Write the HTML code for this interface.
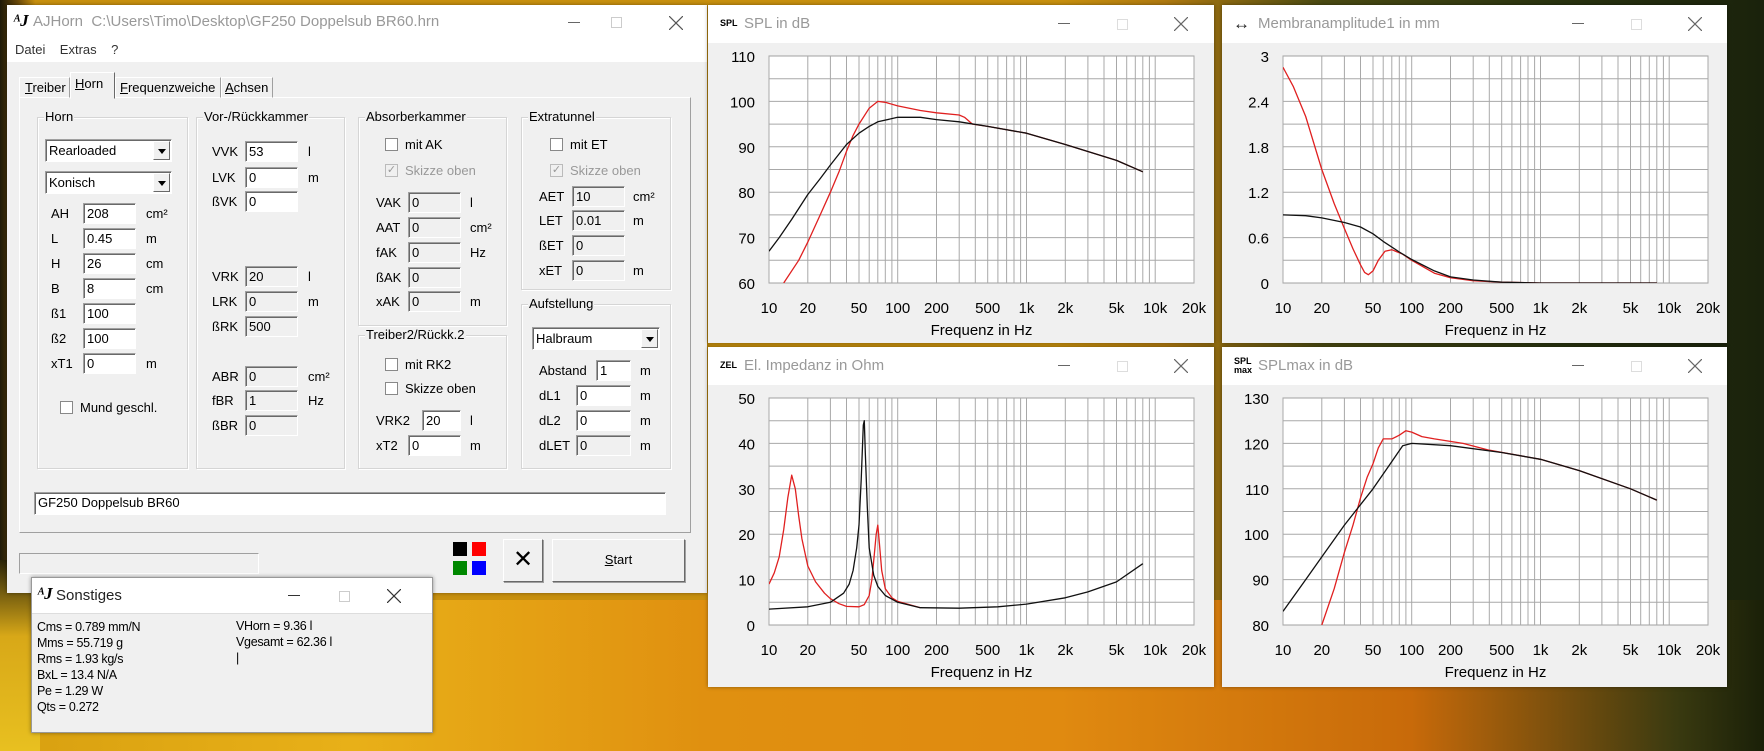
<!DOCTYPE html>
<html><head><meta charset="utf-8">
<style>
*{box-sizing:border-box;margin:0;padding:0}
body{width:1764px;height:751px;overflow:hidden;position:relative;font-family:"Liberation Sans",sans-serif;font-size:13px;color:#000;
background:linear-gradient(90deg,#1f1a08 0%,#6a4a0a 1%,#c8900e 2%,#c8900e 60%,#b07a10 66%,#4a4a12 75%,#2a3410 88%,#1a220c 100%);}
.bgbot{position:absolute;left:0;top:600px;width:1764px;height:151px;background:linear-gradient(90deg,#d8a010 0%,#e8b018 20%,#e09010 40%,#e08a10 60%,#c86a0a 80%,#3a3a10 95%,#1a2008 100%)}
.bgleft{position:absolute;left:0;top:560px;width:40px;height:191px;background:linear-gradient(180deg,#2a2408,#d8a818 40%,#e8c020)}
.win{position:absolute;background:#f0f0f0;box-shadow:0 0 4px rgba(0,0,0,.4)}
.tb{position:absolute;left:0;top:0;right:0;background:#fff}
.tt{position:absolute;color:#999;font-size:15px;white-space:nowrap}
.ab{position:absolute}
.inp{position:absolute;height:21px;background:#fff;border:1px solid;border-color:#a0a0a0 #fff #fff #a0a0a0;box-shadow:inset 1px 1px 0 #696969;padding:2px 0 0 3px;font-size:13px}
.dis{background:#f0f0f0}
.grp{position:absolute;border:1px solid #d5d5d5;box-shadow:1px 1px 0 #fff inset,1px 1px 0 #fff}
.grp>span{position:absolute;left:6px;top:-9px;background:#f0f0f0;padding:0 1px;font-size:13px}
.lbl{position:absolute;font-size:13px;white-space:nowrap}
.cb{position:absolute;width:13px;height:13px;border:1px solid #888;background:#fff}
.cbd{border-color:#bbb;background:#f0f0f0;color:#999;font-size:11px;line-height:11px;text-align:center}
.combo{position:absolute;height:23px;background:#fff;border:1px solid;border-color:#a0a0a0 #fff #fff #a0a0a0;box-shadow:inset 1px 1px 0 #696969;padding:3px 0 0 3px}
.combo i{position:absolute;right:1px;top:1px;width:17px;height:19px;background:#f0f0f0;border:1px solid;border-color:#fff #696969 #696969 #fff}
.combo i:after{content:"";position:absolute;left:4px;top:7px;border:4px solid transparent;border-top:5px solid #000}
.btn{position:absolute;background:#f0f0f0;border:1px solid;border-color:#fff #696969 #696969 #fff;box-shadow:1px 1px 0 #a0a0a0;text-align:center}
.ctl{position:absolute;color:#444;font-size:16px}
.x{position:absolute;width:14px;height:14px}
svg text{font-family:"Liberation Sans",sans-serif}
</style></head><body>
<div class="bgbot"></div><div class="bgleft"></div>

<!-- MAIN WINDOW -->
<div class="win" style="left:7px;top:5px;width:700px;height:588px">
 <div class="tb" style="height:57px"></div>
 <div class="ab" style="left:6px;top:6px;font-family:'Liberation Serif',serif;font-style:italic;font-size:17px;font-weight:bold">ᴬJ</div>
 <div class="tt" style="left:26px;top:8px">AJHorn&nbsp; C:\Users\Timo\Desktop\GF250 Doppelsub BR60.hrn</div>
 <div class="ab" style="left:561px;top:17px;width:12px;border-top:1px solid #666"></div>
 <div class="ab" style="left:604px;top:12px;width:11px;height:11px;border:1px solid #ccc"></div>
 <svg class="x" style="left:662px;top:11px"><path d="M0 0L14 14M14 0L0 14" stroke="#555" stroke-width="1.2"/></svg>
 <div class="lbl" style="left:8px;top:37px;color:#333">Datei&nbsp;&nbsp;&nbsp; Extras&nbsp;&nbsp;&nbsp; ?</div>
 <!-- tab panel -->
 <div class="ab" style="left:12px;top:92px;width:672px;height:436px;border:1px solid;border-color:#fff #a0a0a0 #a0a0a0 #fff"></div>
 <div class="ab" style="left:12px;top:72px;width:51px;height:21px;border:1px solid;border-color:#fff #a0a0a0 transparent #fff"></div>
 <div class="ab" style="left:63px;top:67px;width:45px;height:27px;background:#f0f0f0;border:1px solid;border-color:#fff #696969 transparent #fff"></div>
 <div class="ab" style="left:108px;top:72px;width:106px;height:21px;border:1px solid;border-color:#fff #a0a0a0 transparent #fff"></div>
 <div class="ab" style="left:214px;top:72px;width:52px;height:21px;border:1px solid;border-color:#fff #a0a0a0 transparent #fff"></div>
 <div class="lbl" style="left:18px;top:75px"><u>T</u>reiber</div>
 <div class="lbl" style="left:68px;top:71px"><u>H</u>orn</div>
 <div class="lbl" style="left:113px;top:75px"><u>F</u>requenzweiche</div>
 <div class="lbl" style="left:218px;top:75px"><u>A</u>chsen</div>

 <!-- Horn group -->
 <div class="grp" style="left:30px;top:112px;width:151px;height:352px"><span>Horn</span></div>
 <div class="combo" style="left:38px;top:134px;width:127px">Rearloaded<i></i></div>
 <div class="combo" style="left:38px;top:166px;width:127px">Konisch<i></i></div>
 <div class="lbl" style="left:44px;top:201px">AH</div><div class="inp" style="left:76px;top:198px;width:53px">208</div><div class="lbl" style="left:139px;top:201px">cm²</div>
 <div class="lbl" style="left:44px;top:226px">L</div><div class="inp" style="left:76px;top:223px;width:53px">0.45</div><div class="lbl" style="left:139px;top:226px">m</div>
 <div class="lbl" style="left:44px;top:251px">H</div><div class="inp" style="left:76px;top:248px;width:53px">26</div><div class="lbl" style="left:139px;top:251px">cm</div>
 <div class="lbl" style="left:44px;top:276px">B</div><div class="inp" style="left:76px;top:273px;width:53px">8</div><div class="lbl" style="left:139px;top:276px">cm</div>
 <div class="lbl" style="left:44px;top:301px">ß1</div><div class="inp" style="left:76px;top:298px;width:53px">100</div>
 <div class="lbl" style="left:44px;top:326px">ß2</div><div class="inp" style="left:76px;top:323px;width:53px">100</div>
 <div class="lbl" style="left:44px;top:351px">xT1</div><div class="inp" style="left:76px;top:348px;width:53px">0</div><div class="lbl" style="left:139px;top:351px">m</div>
 <div class="cb" style="left:53px;top:396px"></div><div class="lbl" style="left:73px;top:395px">Mund geschl.</div>

 <!-- Vor/Rück -->
 <div class="grp" style="left:189px;top:112px;width:149px;height:352px"><span>Vor-/Rückkammer</span></div>
 <div class="lbl" style="left:205px;top:139px">VVK</div><div class="inp" style="left:238px;top:136px;width:53px">53</div><div class="lbl" style="left:301px;top:139px">l</div>
 <div class="lbl" style="left:205px;top:165px">LVK</div><div class="inp" style="left:238px;top:162px;width:53px">0</div><div class="lbl" style="left:301px;top:165px">m</div>
 <div class="lbl" style="left:205px;top:189px">ßVK</div><div class="inp" style="left:238px;top:186px;width:53px">0</div>
 <div class="lbl" style="left:205px;top:264px">VRK</div><div class="inp dis" style="left:238px;top:261px;width:53px">20</div><div class="lbl" style="left:301px;top:264px">l</div>
 <div class="lbl" style="left:205px;top:289px">LRK</div><div class="inp dis" style="left:238px;top:286px;width:53px">0</div><div class="lbl" style="left:301px;top:289px">m</div>
 <div class="lbl" style="left:205px;top:314px">ßRK</div><div class="inp dis" style="left:238px;top:311px;width:53px">500</div>
 <div class="lbl" style="left:205px;top:364px">ABR</div><div class="inp dis" style="left:238px;top:361px;width:53px">0</div><div class="lbl" style="left:301px;top:364px">cm²</div>
 <div class="lbl" style="left:205px;top:388px">fBR</div><div class="inp dis" style="left:238px;top:385px;width:53px">1</div><div class="lbl" style="left:301px;top:388px">Hz</div>
 <div class="lbl" style="left:205px;top:413px">ßBR</div><div class="inp dis" style="left:238px;top:410px;width:53px">0</div>

 <!-- Absorberkammer -->
 <div class="grp" style="left:351px;top:112px;width:149px;height:209px"><span>Absorberkammer</span></div>
 <div class="cb" style="left:378px;top:133px"></div><div class="lbl" style="left:398px;top:132px">mit AK</div>
 <div class="cb cbd" style="left:378px;top:159px">✓</div><div class="lbl" style="left:398px;top:158px;color:#999">Skizze oben</div>
 <div class="lbl" style="left:369px;top:190px">VAK</div><div class="inp dis" style="left:401px;top:187px;width:53px">0</div><div class="lbl" style="left:463px;top:190px">l</div>
 <div class="lbl" style="left:369px;top:215px">AAT</div><div class="inp dis" style="left:401px;top:212px;width:53px">0</div><div class="lbl" style="left:463px;top:215px">cm²</div>
 <div class="lbl" style="left:369px;top:240px">fAK</div><div class="inp dis" style="left:401px;top:237px;width:53px">0</div><div class="lbl" style="left:463px;top:240px">Hz</div>
 <div class="lbl" style="left:369px;top:265px">ßAK</div><div class="inp dis" style="left:401px;top:262px;width:53px">0</div>
 <div class="lbl" style="left:369px;top:289px">xAK</div><div class="inp dis" style="left:401px;top:286px;width:53px">0</div><div class="lbl" style="left:463px;top:289px">m</div>

 <!-- Treiber2 -->
 <div class="grp" style="left:351px;top:330px;width:149px;height:134px"><span>Treiber2/Rückk.2</span></div>
 <div class="cb" style="left:378px;top:353px"></div><div class="lbl" style="left:398px;top:352px">mit RK2</div>
 <div class="cb" style="left:378px;top:377px"></div><div class="lbl" style="left:398px;top:376px">Skizze oben</div>
 <div class="lbl" style="left:369px;top:408px">VRK2</div><div class="inp" style="left:415px;top:405px;width:39px">20</div><div class="lbl" style="left:463px;top:408px">l</div>
 <div class="lbl" style="left:369px;top:433px">xT2</div><div class="inp" style="left:401px;top:430px;width:53px">0</div><div class="lbl" style="left:463px;top:433px">m</div>

 <!-- Extratunnel -->
 <div class="grp" style="left:514px;top:112px;width:150px;height:173px"><span>Extratunnel</span></div>
 <div class="cb" style="left:543px;top:133px"></div><div class="lbl" style="left:563px;top:132px">mit ET</div>
 <div class="cb cbd" style="left:543px;top:159px">✓</div><div class="lbl" style="left:563px;top:158px;color:#999">Skizze oben</div>
 <div class="lbl" style="left:532px;top:184px">AET</div><div class="inp dis" style="left:565px;top:181px;width:53px">10</div><div class="lbl" style="left:626px;top:184px">cm²</div>
 <div class="lbl" style="left:532px;top:208px">LET</div><div class="inp dis" style="left:565px;top:205px;width:53px">0.01</div><div class="lbl" style="left:626px;top:208px">m</div>
 <div class="lbl" style="left:532px;top:233px">ßET</div><div class="inp dis" style="left:565px;top:230px;width:53px">0</div>
 <div class="lbl" style="left:532px;top:258px">xET</div><div class="inp dis" style="left:565px;top:255px;width:53px">0</div><div class="lbl" style="left:626px;top:258px">m</div>

 <!-- Aufstellung -->
 <div class="grp" style="left:514px;top:299px;width:150px;height:165px"><span>Aufstellung</span></div>
 <div class="combo" style="left:525px;top:322px;width:128px">Halbraum<i></i></div>
 <div class="lbl" style="left:532px;top:358px">Abstand</div><div class="inp" style="left:589px;top:355px;width:35px">1</div><div class="lbl" style="left:633px;top:358px">m</div>
 <div class="lbl" style="left:532px;top:383px">dL1</div><div class="inp" style="left:569px;top:380px;width:55px">0</div><div class="lbl" style="left:633px;top:383px">m</div>
 <div class="lbl" style="left:532px;top:408px">dL2</div><div class="inp" style="left:569px;top:405px;width:55px">0</div><div class="lbl" style="left:633px;top:408px">m</div>
 <div class="lbl" style="left:532px;top:433px">dLET</div><div class="inp dis" style="left:569px;top:430px;width:55px">0</div><div class="lbl" style="left:633px;top:433px">m</div>

 <div class="inp" style="left:27px;top:487px;width:632px;height:23px">GF250 Doppelsub BR60</div>
 <div class="ab" style="left:12px;top:548px;width:240px;height:21px;border:1px solid;border-color:#a0a0a0 #fff #fff #a0a0a0"></div>
 <div class="ab" style="left:446px;top:537px;width:14px;height:14px;background:#000"></div>
 <div class="ab" style="left:465px;top:537px;width:14px;height:14px;background:#f00"></div>
 <div class="ab" style="left:446px;top:556px;width:14px;height:14px;background:#080"></div>
 <div class="ab" style="left:465px;top:556px;width:14px;height:14px;background:#00f"></div>
 <div class="btn" style="left:496px;top:534px;width:40px;height:43px;font-size:24px;line-height:40px">✕</div>
 <div class="btn" style="left:545px;top:534px;width:133px;height:43px;line-height:40px"><u>S</u>tart</div>
</div>

<!-- SONSTIGES -->
<div class="win" style="left:31px;top:577px;width:402px;height:156px;border:1px solid #999">
 <div class="tb" style="height:36px;border-bottom:1px solid #ddd"></div>
 <div class="ab" style="left:5px;top:6px;font-family:'Liberation Serif',serif;font-style:italic;font-size:17px;font-weight:bold">ᴬJ</div>
 <div class="ab" style="left:24px;top:9px;font-size:15px;color:#222">Sonstiges</div>
 <div class="ab" style="left:256px;top:17px;width:12px;border-top:1px solid #333"></div>
 <div class="ab" style="left:307px;top:13px;width:11px;height:11px;border:1px solid #ccc"></div>
 <svg class="x" style="left:355px;top:11px"><path d="M0 0L14 14M14 0L0 14" stroke="#333" stroke-width="1.2"/></svg>
 <div class="ab" style="left:5px;top:41px;font-size:12.5px;line-height:16px;letter-spacing:-.3px">Cms = 0.789 mm/N<br>Mms = 55.719 g<br>Rms = 1.93 kg/s<br>BxL = 13.4 N/A<br>Pe = 1.29 W<br>Qts = 0.272</div>
 <div class="ab" style="left:204px;top:40px;font-size:12.5px;line-height:16px;letter-spacing:-.3px">VHorn = 9.36 l<br>Vgesamt = 62.36 l<br>|</div>
</div>

<!-- CHARTS -->
<div class="win" id="c1" style="left:708px;top:5px;width:506px;height:338px"></div>
<div class="win" id="c2" style="left:1222px;top:5px;width:505px;height:338px"></div>
<div class="win" id="c3" style="left:708px;top:347px;width:506px;height:340px"></div>
<div class="win" id="c4" style="left:1222px;top:347px;width:505px;height:340px"></div>

<script>
var L=61,T=51,W=425,H=227;
function xm(f){return L+W*Math.log10(f/10)/Math.log10(2000);}
function build(id,icon,title,ylabels,ymin,ymax,curves){
 var el=document.getElementById(id);
 var s='<div class="tb" style="height:38px"></div>';
 if(icon=='max') s+='<div class="ab" style="left:12px;top:10px;font-size:9px;font-weight:bold;line-height:9px">SPL<br>max</div>';
 else if(icon=='arr') s+='<div class="ab" style="left:11px;top:9px;font-size:17px;color:#222">↔</div>';
 else s+='<div class="ab" style="left:12px;top:13px;font-size:9px;font-weight:bold">'+icon+'</div>';
 s+='<div class="tt" style="left:36px;top:10px">'+title+'</div>';
 s+='<div class="ab" style="left:350px;top:18px;width:12px;border-top:1px solid #666"></div><div class="ab" style="left:409px;top:14px;width:11px;height:11px;border:1px solid #ddd"></div><svg class="x" style="left:466px;top:12px"><path d="M0 0L14 14M14 0L0 14" stroke="#666" stroke-width="1.2"/></svg>';
 var g='<svg width="506" height="340" style="position:absolute;left:0;top:0">';
 g+='<rect x="'+L+'" y="'+T+'" width="'+W+'" height="'+H+'" fill="#fff" stroke="#a0a0a0"/>';
 [10,100,1000,10000].forEach(function(d){for(var m=1;m<10;m++){var f=d*m;if(f>20000)break;var x=xm(f).toFixed(1);g+='<line x1="'+x+'" x2="'+x+'" y1="'+T+'" y2="'+(T+H)+'" stroke="#a8a8a8"/>';}});
 for(var i=1;i<10;i++){var y=(T+H*i/10).toFixed(1);g+='<line x1="'+L+'" x2="'+(L+W)+'" y1="'+y+'" y2="'+y+'" stroke="#a8a8a8"/>';}
 ylabels.forEach(function(t,i){g+='<text x="47" y="'+(T+H*i/5+6).toFixed(1)+'" text-anchor="end" font-size="15">'+t+'</text>';});
 var xl=[[10,'10'],[20,'20'],[50,'50'],[100,'100'],[200,'200'],[500,'500'],[1000,'1k'],[2000,'2k'],[5000,'5k'],[10000,'10k'],[20000,'20k']];
 xl.forEach(function(a){g+='<text x="'+xm(a[0]).toFixed(1)+'" y="'+(T+H+30)+'" text-anchor="middle" font-size="15">'+a[1]+'</text>';});
 g+='<text x="'+(L+W/2)+'" y="'+(T+H+52)+'" text-anchor="middle" font-size="15">Frequenz in Hz</text>';
 g+='<clipPath id="cp'+id+'"><rect x="'+L+'" y="'+T+'" width="'+W+'" height="'+H+'"/></clipPath>';
 curves.forEach(function(c){
  var p=c.pts.map(function(q){return xm(q[0]).toFixed(1)+','+(T+H-(q[1]-ymin)/(ymax-ymin)*H).toFixed(1);}).join(' ');
  g+='<polyline clip-path="url(#cp'+id+')" points="'+p+'" fill="none" stroke="'+c.col+'" stroke-width="1.3" stroke-linejoin="round"/>';
 });
 g+='</svg>';
 el.innerHTML=s+g;
}
build('c1','SPL','SPL in dB',['110','100','90','80','70','60'],60,110,[
 {col:'#e02020',pts:[[13,60],[17,65],[20,69],[25,75],[30,80],[35,84.5],[40,89],[45,92.5],[50,95],[60,98.5],[70,100],[80,99.8],[100,99],[150,98],[200,97.5],[300,97],[330,96.5],[380,95],[500,94.5],[1000,93],[2000,90.5],[5000,87],[8000,84.5]]},
 {col:'#111',pts:[[10,67],[12,70],[15,74],[20,79.5],[25,83],[30,86],[40,90.5],[50,93],[60,94.5],[70,95.5],[100,96.5],[150,96.5],[200,96],[300,95.5],[500,94.5],[1000,93],[2000,90.5],[5000,87],[8000,84.5]]}]);
build('c2','arr','Membranamplitude1 in mm',['3','2.4','1.8','1.2','0.6','0'],0,3,[
 {col:'#e02020',pts:[[10,2.85],[12,2.6],[15,2.2],[20,1.5],[25,1.05],[30,0.72],[35,0.45],[40,0.24],[43,0.14],[46,0.11],[50,0.16],[55,0.3],[62,0.42],[70,0.44],[85,0.38],[100,0.3],[150,0.13],[200,0.07],[300,0.03],[500,0.01],[1000,0],[8000,0]]},
 {col:'#111',pts:[[10,0.9],[15,0.89],[20,0.86],[30,0.8],[40,0.74],[50,0.65],[60,0.55],[80,0.41],[100,0.31],[150,0.16],[200,0.08],[300,0.04],[500,0.01],[1000,0],[8000,0]]}]);
build('c3','ZEL','El. Impedanz in Ohm',['50','40','30','20','10','0'],0,50,[
 {col:'#e02020',pts:[[10,9],[11,11.5],[12,15],[13,21],[14,28],[15,33],[16,30],[17,24],[18,19],[20,13],[23,9.5],[27,7],[30,5.8],[35,4.7],[40,4.1],[50,4],[55,4.5],[60,6.5],[63,10],[66,16],[68,20],[70,22],[72,18],[75,12],[80,8],[90,6],[100,5.2],[150,3.8]]},
 {col:'#111',pts:[[10,3.5],[20,4],[30,5],[38,7],[42,9],[45,12],[48,17],[50,22],[52,32],[54,44],[55,45],[56,38],[58,26],[60,17],[65,11],[70,8.5],[80,6.5],[100,5],[150,3.8],[300,3.7],[600,4],[1000,4.6],[2000,6],[3000,7.3],[5000,9.5],[8000,13.5]]}]);
build('c4','max','SPLmax in dB',['130','120','110','100','90','80'],80,130,[
 {col:'#e02020',pts:[[20,80],[25,88],[30,96],[35,102],[40,108],[45,112.5],[50,115.5],[55,119],[60,121],[70,121],[80,121.8],[90,122.8],[100,122.5],[120,121.5],[150,121],[250,120],[400,118.5],[1000,116.5],[2000,114],[5000,110],[8000,107.5]]},
 {col:'#111',pts:[[10,83],[15,90],[20,95],[30,102],[50,110],[70,116],[85,119.5],[100,120],[200,119.5],[500,118],[1000,116.5],[2000,114],[5000,110],[8000,107.5]]}]);
</script>
</body></html>
